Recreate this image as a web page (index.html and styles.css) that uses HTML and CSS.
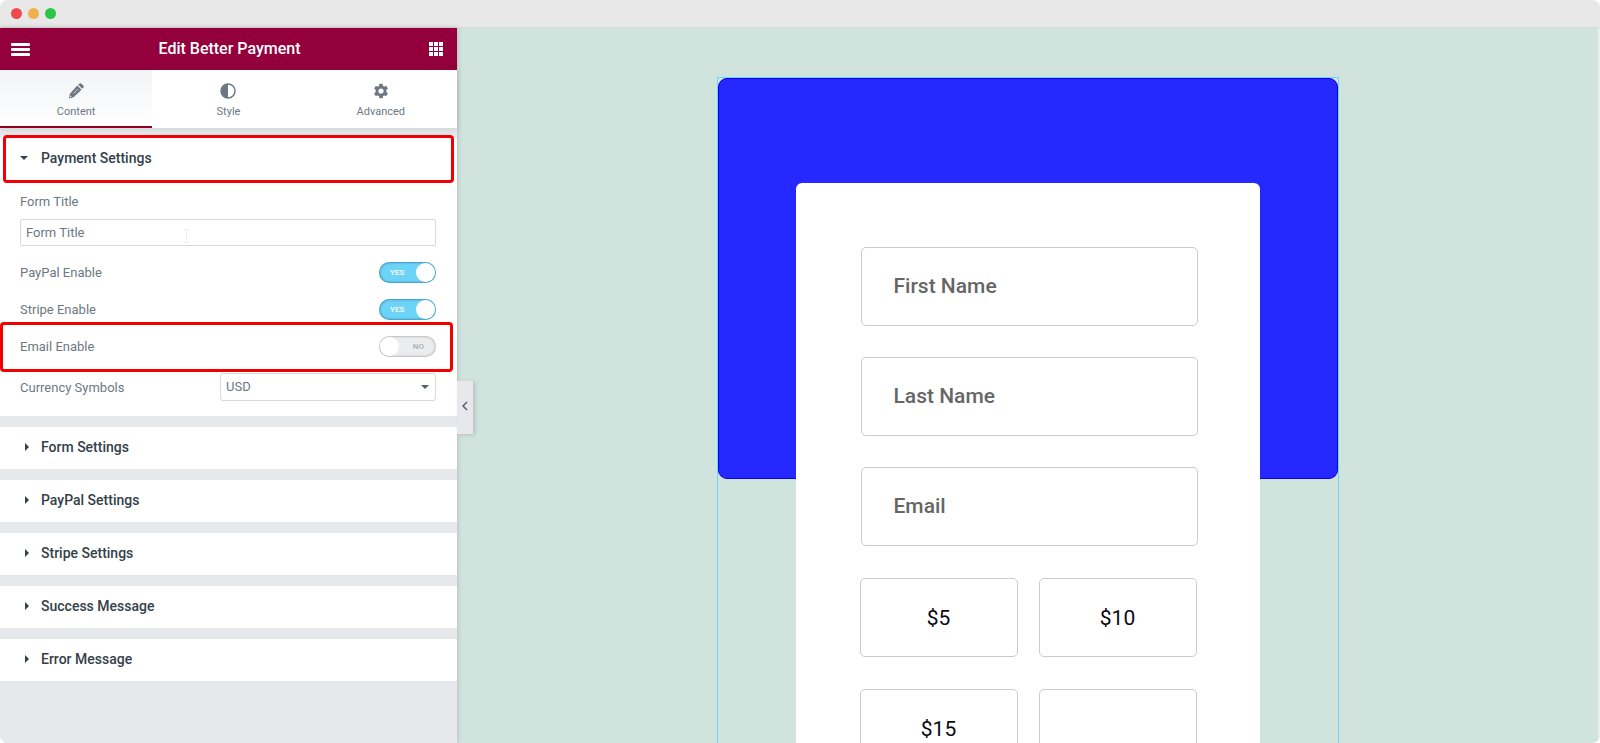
FILE: index.html
```html
<!DOCTYPE html>
<html lang="en">

<head>
    <meta charset="UTF-8">
    <meta name="viewport" content="width=device-width, initial-scale=1.0">
    <title>Edit Better Payment</title>
    <link rel="stylesheet" href="styles.css">
</head>

<body>
    <div class="window">
        <div class="titlebar">
            <span class="dot red"></span>
            <span class="dot yellow"></span>
            <span class="dot green"></span>
        </div>
        <div class="editor">
            <aside class="panel">
                <header class="panel-header">
                    <button class="icon-btn" aria-label="Menu">
                        <svg width="19" height="14" viewBox="0 0 19 14" fill="#fff">
                            <rect y="1" width="19" height="3" rx="1" />
                            <rect y="6" width="19" height="3" rx="1" />
                            <rect y="11" width="19" height="3" rx="1" />
                        </svg>
                    </button>
                    <h1>Edit Better Payment</h1>
                    <button class="icon-btn" aria-label="Widgets">
                        <svg width="14" height="14" viewBox="0 0 14 14" fill="#fff">
                            <path d="M0 0h4v4H0zM5 0h4v4H5zM10 0h4v4h-4zM0 5h4v4H0zM5 5h4v4H5zM10 5h4v4h-4zM0 10h4v4H0zM5 10h4v4H5zM10 10h4v4h-4z" />
                        </svg>
                    </button>
                </header>

                <nav class="tabs">
                    <button class="tab active">
                        <svg width="16" height="16" viewBox="0 0 16 16" fill="#6d7882">
                            <path d="M9.300 2.500l4.200 4.200-7.900 7.600L.9 15.400l1-4.700zM10.200 1.700l1-1c.7-.7 1.700-.7 2.400 0l1.700 1.700c.7.700.7 1.700 0 2.400l-1 1z" />
                            <path d="M5.500 10.500l4.500-4.500" stroke="#f8f9fa" stroke-width=".7" />
                            <path d="M2.200 13l.9.900" stroke="#f8f9fa" stroke-width="1.200" />
                        </svg>
                        Content
                    </button>
                    <button class="tab">
                        <svg width="16" height="16" viewBox="0 0 16 16">
                            <circle cx="8" cy="8" r="7" fill="none" stroke="#6d7882" stroke-width="1.500" />
                            <path d="M8 1a7 7 0 0 0 0 14z" fill="#6d7882" />
                        </svg>
                        Style
                    </button>
                    <button class="tab">
                        <svg width="16" height="16" viewBox="0 0 16 16" fill="#6d7882">
                            <path fill-rule="evenodd" d="M6.400.8h3.200l.4 2.100 1.300.7 2-.7 1.600 2.700-1.600 1.400v2l1.600 1.400-1.600 2.700-2-.7-1.300.7-.4 2.100H6.400L6 13.100l-1.300-.7-2 .7-1.600-2.700L2.700 9V7L1.100 5.600l1.600-2.700 2 .7L6 2.900zM8 5.400a2.600 2.600 0 1 0 0 5.200 2.600 2.600 0 0 0 0-5.200z" />
                        </svg>
                        Advanced
                    </button>
                </nav>

                <section class="section open">
                    <button class="section-title marked" aria-expanded="true"><span class="caret down"></span>Payment Settings</button>
                    <div class="controls">
                        <div class="control stacked">
                            <label for="form-title">Form Title</label>
                            <input type="text" id="form-title" class="text-input" value="Form Title">
                            <svg class="cursor" width="7" height="14" viewBox="0 0 7 14" fill="none" stroke="#ececec">
                                <path d="M1 .5h2l.5.5.5-.5h2M3.500 1v12M1 13.500h2l.5-.5.5.5h2" />
                            </svg>
                        </div>
                        <div class="control">
                            <label for="paypal-enable">PayPal Enable</label>
                            <span class="switch">
                                <input type="checkbox" id="paypal-enable" checked>
                                <span class="on">YES</span>
                            </span>
                        </div>
                        <div class="control">
                            <label for="stripe-enable">Stripe Enable</label>
                            <span class="switch">
                                <input type="checkbox" id="stripe-enable" checked>
                                <span class="on">YES</span>
                            </span>
                        </div>
                        <div class="control marked-row">
                            <label for="email-enable">Email Enable</label>
                            <span class="switch">
                                <input type="checkbox" id="email-enable">
                                <span class="off">NO</span>
                            </span>
                        </div>
                        <div class="control currency">
                            <label for="currency">Currency Symbols</label>
                            <span class="select-box">
                                <select id="currency">
                                    <option>USD</option>
                                </select>
                                <span class="arrow"></span>
                            </span>
                        </div>
                    </div>
                </section>

                <section class="section"><button class="section-title"><span class="caret"></span>Form Settings</button></section>
                <section class="section"><button class="section-title"><span class="caret"></span>PayPal Settings</button></section>
                <section class="section"><button class="section-title"><span class="caret"></span>Stripe Settings</button></section>
                <section class="section"><button class="section-title"><span class="caret"></span>Success Message</button></section>
                <section class="section"><button class="section-title"><span class="caret"></span>Error Message</button></section>

                <button class="collapse" aria-label="Hide panel">
                    <svg width="6" height="10" viewBox="0 0 6 10" fill="none" stroke="#556068" stroke-width="1.500">
                        <path d="M5 1L1 5l4 4" />
                    </svg>
                </button>
            </aside>

            <main class="canvas">
                <div class="widget">
                    <form class="card">
                        <input type="text" class="field" placeholder="First Name" aria-label="First Name">
                        <input type="text" class="field" placeholder="Last Name" aria-label="Last Name">
                        <input type="text" class="field" placeholder="Email" aria-label="Email">
                        <div class="amounts">
                            <button type="button" class="amount">$5</button>
                            <button type="button" class="amount">$10</button>
                            <button type="button" class="amount">$15</button>
                            <input type="text" class="amount" aria-label="Other amount">
                        </div>
                    </form>
                </div>
            </main>
        </div>
    </div>
</body>

</html>
```
FILE: styles.css
```css
* {
    box-sizing: border-box;
}

body {
    margin: 0;
    background-color: white;
    font-family: Roboto, "Liberation Sans", sans-serif;
}

button,
input,
select {
    font-family: inherit;
    margin: 0;
}

button {
    border: none;
    background: none;
    padding: 0;
    cursor: pointer;
}

.window {
    display: flex;
    flex-direction: column;
    height: 100vh;
    overflow: hidden;
    border-radius: 8px;
}

/* title bar */
.titlebar {
    display: flex;
    align-items: center;
    gap: 6px;
    flex: none;
    height: 28px;
    padding-left: 11px;
    background-color: #e8e8e8;
    border-bottom: 1px solid #d9dcda;
}

.dot {
    width: 11px;
    height: 11px;
    border-radius: 50%;
}

.red {
    background-color: #f04b4b;
}

.yellow {
    background-color: #f0b04f;
}

.green {
    background-color: #2bc548;
}

.editor {
    display: flex;
    flex: 1;
    min-height: 0;
}

/* left panel */
.panel {
    position: relative;
    z-index: 1;
    flex: none;
    width: 457px;
    background-color: #e6e8ec;
    box-shadow: 0 0 5px rgba(0, 0, 0, 0.2);
}

.panel-header {
    display: flex;
    align-items: center;
    justify-content: space-between;
    height: 42px;
    padding: 0 14px 0 11px;
    background-color: #93003c;
}

.panel-header h1 {
    margin: 0;
    padding-bottom: 2px;
    font-size: 16px;
    font-weight: 500;
    color: white;
}

.icon-btn {
    display: flex;
}

.tabs {
    display: grid;
    grid-template-columns: 1fr 1fr 1fr;
    height: 58px;
    background-color: white;
    box-shadow: 0 1px 6px rgba(0, 0, 0, 0.12);
}

.tab {
    display: flex;
    flex-direction: column;
    align-items: center;
    gap: 6px;
    padding-top: 13px;
    border-bottom: 2px solid transparent;
    font-size: 11px;
    line-height: 13px;
    color: #6d7882;
}

.tab.active {
    background-image: linear-gradient(#f1f3f5, white);
    border-bottom-color: #93001e;
}

.section {
    margin-top: 11px;
    background-color: white;
}

.section.open {
    margin-top: 10px;
}

.section-title {
    display: flex;
    align-items: center;
    width: 100%;
    height: 42px;
    padding: 0 0 2px 24px;
    font-size: 14px;
    font-weight: 500;
    color: #343f4a;
    text-align: left;
}

.caret {
    width: 17px;
    flex: none;
}

.caret::before {
    content: "";
    display: block;
    width: 0;
    border: 4px solid transparent;
    border-left-color: #343f4a;
    border-right: none;
    margin-left: 1px;
}

.caret.down::before {
    border: 4px solid transparent;
    border-top-color: #343f4a;
    border-bottom: none;
    margin-left: -4px;
}

/* red frames */
.marked,
.marked-row {
    position: relative;
}

.marked::after,
.marked-row::after {
    content: "";
    position: absolute;
    inset: -3px 3px;
    border: 3px solid #f00000;
    border-radius: 4px;
    pointer-events: none;
}

.marked-row::after {
    inset: -14px -17px -15px -20px;
}

.controls {
    display: flex;
    flex-direction: column;
    gap: 16px;
    padding: 14px 21px 15px 20px;
}

.control {
    display: flex;
    align-items: center;
    justify-content: space-between;
    height: 21px;
    font-size: 13px;
    color: #6d7882;
}

.control.stacked {
    position: relative;
    flex-direction: column;
    align-items: stretch;
    height: auto;
    line-height: 16px;
    gap: 9px;
}

.text-input {
    width: 100%;
    height: 27px;
    padding: 0 5px;
    border: 1px solid #d5dadf;
    border-radius: 2px;
    font-size: 13px;
    color: #6d7882;
}

.cursor {
    position: absolute;
    left: 163px;
    bottom: 3px;
}

.switch {
    display: grid;
    align-items: center;
    width: 57px;
    height: 21px;
}

.switch input,
.switch span {
    grid-area: 1 / 1;
}

.switch input {
    appearance: none;
    display: flex;
    width: 100%;
    height: 100%;
    border-radius: 11px;
    background-color: #ebecee;
    box-shadow: inset 0 0 2px 1px rgba(0, 0, 0, 0.2);
}

.switch input:checked {
    justify-content: flex-end;
    background-color: #6ed4f7;
    box-shadow: inset 0 0 2px 1px rgba(20, 90, 140, 0.5);
}

.switch input::before {
    content: "";
    width: 19px;
    height: 19px;
    margin: 1px;
    border-radius: 50%;
    background-color: white;
}

.switch span {
    z-index: 1;
    padding-bottom: 1px;
    font-size: 8px;
    font-weight: 500;
    pointer-events: none;
}

.switch .on {
    padding-left: 11px;
    color: white;
}

.switch .off {
    padding-right: 12px;
    text-align: right;
    color: #a4afb7;
}

.control.currency {
    height: 28px;
}

.select-box {
    position: relative;
    width: 216px;
}

.select-box select {
    appearance: none;
    display: block;
    width: 100%;
    height: 28px;
    padding: 0 5px 1px;
    border: 1px solid #d5dadf;
    border-radius: 3px;
    background-color: white;
    font-size: 13px;
    color: #6d7882;
}

.arrow {
    position: absolute;
    top: 12px;
    right: 7px;
    border: 4px solid transparent;
    border-top-color: #556068;
    border-bottom: none;
    pointer-events: none;
}

.collapse {
    position: absolute;
    top: 353px;
    left: 100%;
    display: flex;
    align-items: center;
    justify-content: center;
    width: 16px;
    height: 53px;
    padding-bottom: 3px;
    background-color: #e6e8ec;
    box-shadow: 2px 1px 4px rgba(0, 0, 0, 0.15);
}

/* preview */
.canvas {
    flex: 1;
    padding: 49px 20px 0;
    border-right: 2px solid #e9efec;
    background-color: #d0e3dc;
}

.widget {
    position: relative;
    max-width: 622px;
    margin: 0 auto;
    padding: 105px 78px 0;
    border: 1px solid #71d7f7;
}

.widget::before {
    content: "";
    position: absolute;
    inset: 0 0 auto;
    height: 399px;
    border: 1px solid #0800f0;
    border-radius: 9px;
    background-color: #2529ff;
}

.card {
    position: relative;
    display: flex;
    flex-direction: column;
    gap: 31px;
    padding: 64px 62px 64px 65px;
    border-radius: 6px;
    background-color: white;
}

.field,
.amount {
    width: 100%;
    height: 79px;
    border: 1px solid #cccccc;
    border-radius: 5px;
    background-color: white;
    font-size: 21px;
}

.field {
    padding: 0 32px 2px;
    font-weight: 500;
}

.field::placeholder {
    color: #666666;
}

.amounts {
    display: grid;
    grid-template-columns: 1fr 1fr;
    gap: 32px 21px;
    margin: 1px 1px 0 -1px;
}

.amount {
    color: #0a0a14;
}
```
